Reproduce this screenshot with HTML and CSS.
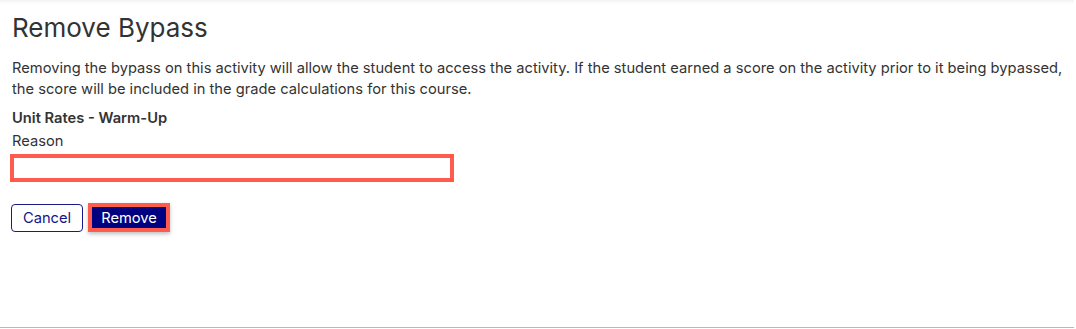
FILE: index.html
```html
<!DOCTYPE html>
<html lang="en">
<head>
<meta charset="utf-8">
<title>Remove Bypass</title>
<link rel="stylesheet" href="styles.css">
</head>
<body>
<div class="panel">
  <h1 class="title">Remove Bypass</h1>
  <p class="desc">Removing the bypass on this activity will allow the student to access the activity. If the student earned a score on the activity prior to it being bypassed, the score will be included in the grade calculations for this course.</p>
  <div class="activity">Unit Rates - Warm-Up</div>
  <label class="label" for="reason">Reason</label>
  <input class="reason" id="reason" type="text">
  <div class="actions">
    <button class="btn btn-cancel" type="button">Cancel</button>
    <button class="btn btn-remove" type="button">Remove</button>
  </div>
</div>
</body>
</html>
```
FILE: styles.css
```css
html, body {
  margin: 0;
  padding: 0;
  background: #ffffff;
}
body {
  font-family: Inter, "Liberation Sans", sans-serif;
  color: #333333;
}
.panel {
  box-sizing: border-box;
  height: 328px;
  padding: 12px 6px 0 12px;
  background: linear-gradient(#f3f3f6 0, #ffffff 4px);
  border-bottom: 1px solid #b9b9b9;
  margin-right: 2px;
}
.title {
  margin: 0;
  font-size: 26px;
  font-weight: 400;
  line-height: 32px;
  color: #333333;
}
.desc {
  margin: 14px 0 0 0;
  font-size: 14.7px;
  line-height: 21px;
}
.activity {
  margin-top: 8px;
  font-size: 14.7px;
  font-weight: 600;
  line-height: 21px;
}
.label {
  display: block;
  font-size: 14.7px;
  line-height: 21px;
  margin-top: 2px;
}
.reason {
  display: block;
  box-sizing: border-box;
  width: 444px;
  height: 28px;
  margin: 2px 0 0 -2px;
  border: 4px solid #ff5b4f;
  background: #ffffff;
  outline: none;
}
.actions {
  display: flex;
  align-items: flex-start;
  gap: 5px;
  margin-top: 22px;
  margin-left: -1px;
}
.btn {
  font-family: Inter, "Liberation Sans", sans-serif;
  font-size: 14.7px;
  cursor: pointer;
}
.btn-cancel {
  box-sizing: border-box;
  width: 72px;
  height: 28px;
  border: 1px solid #1a1a8a;
  border-radius: 4px;
  background: #ffffff;
  color: #15158a;
  padding: 0;
}
.btn-remove {
  box-sizing: border-box;
  width: 82px;
  height: 29px;
  border: 4px solid #ff5b4f;
  background: #000080;
  color: #ffffff;
  padding: 0;
  margin-top: -1px;
  box-shadow: 0 2px 4px rgba(0, 0, 0, 0.25);
}
```
